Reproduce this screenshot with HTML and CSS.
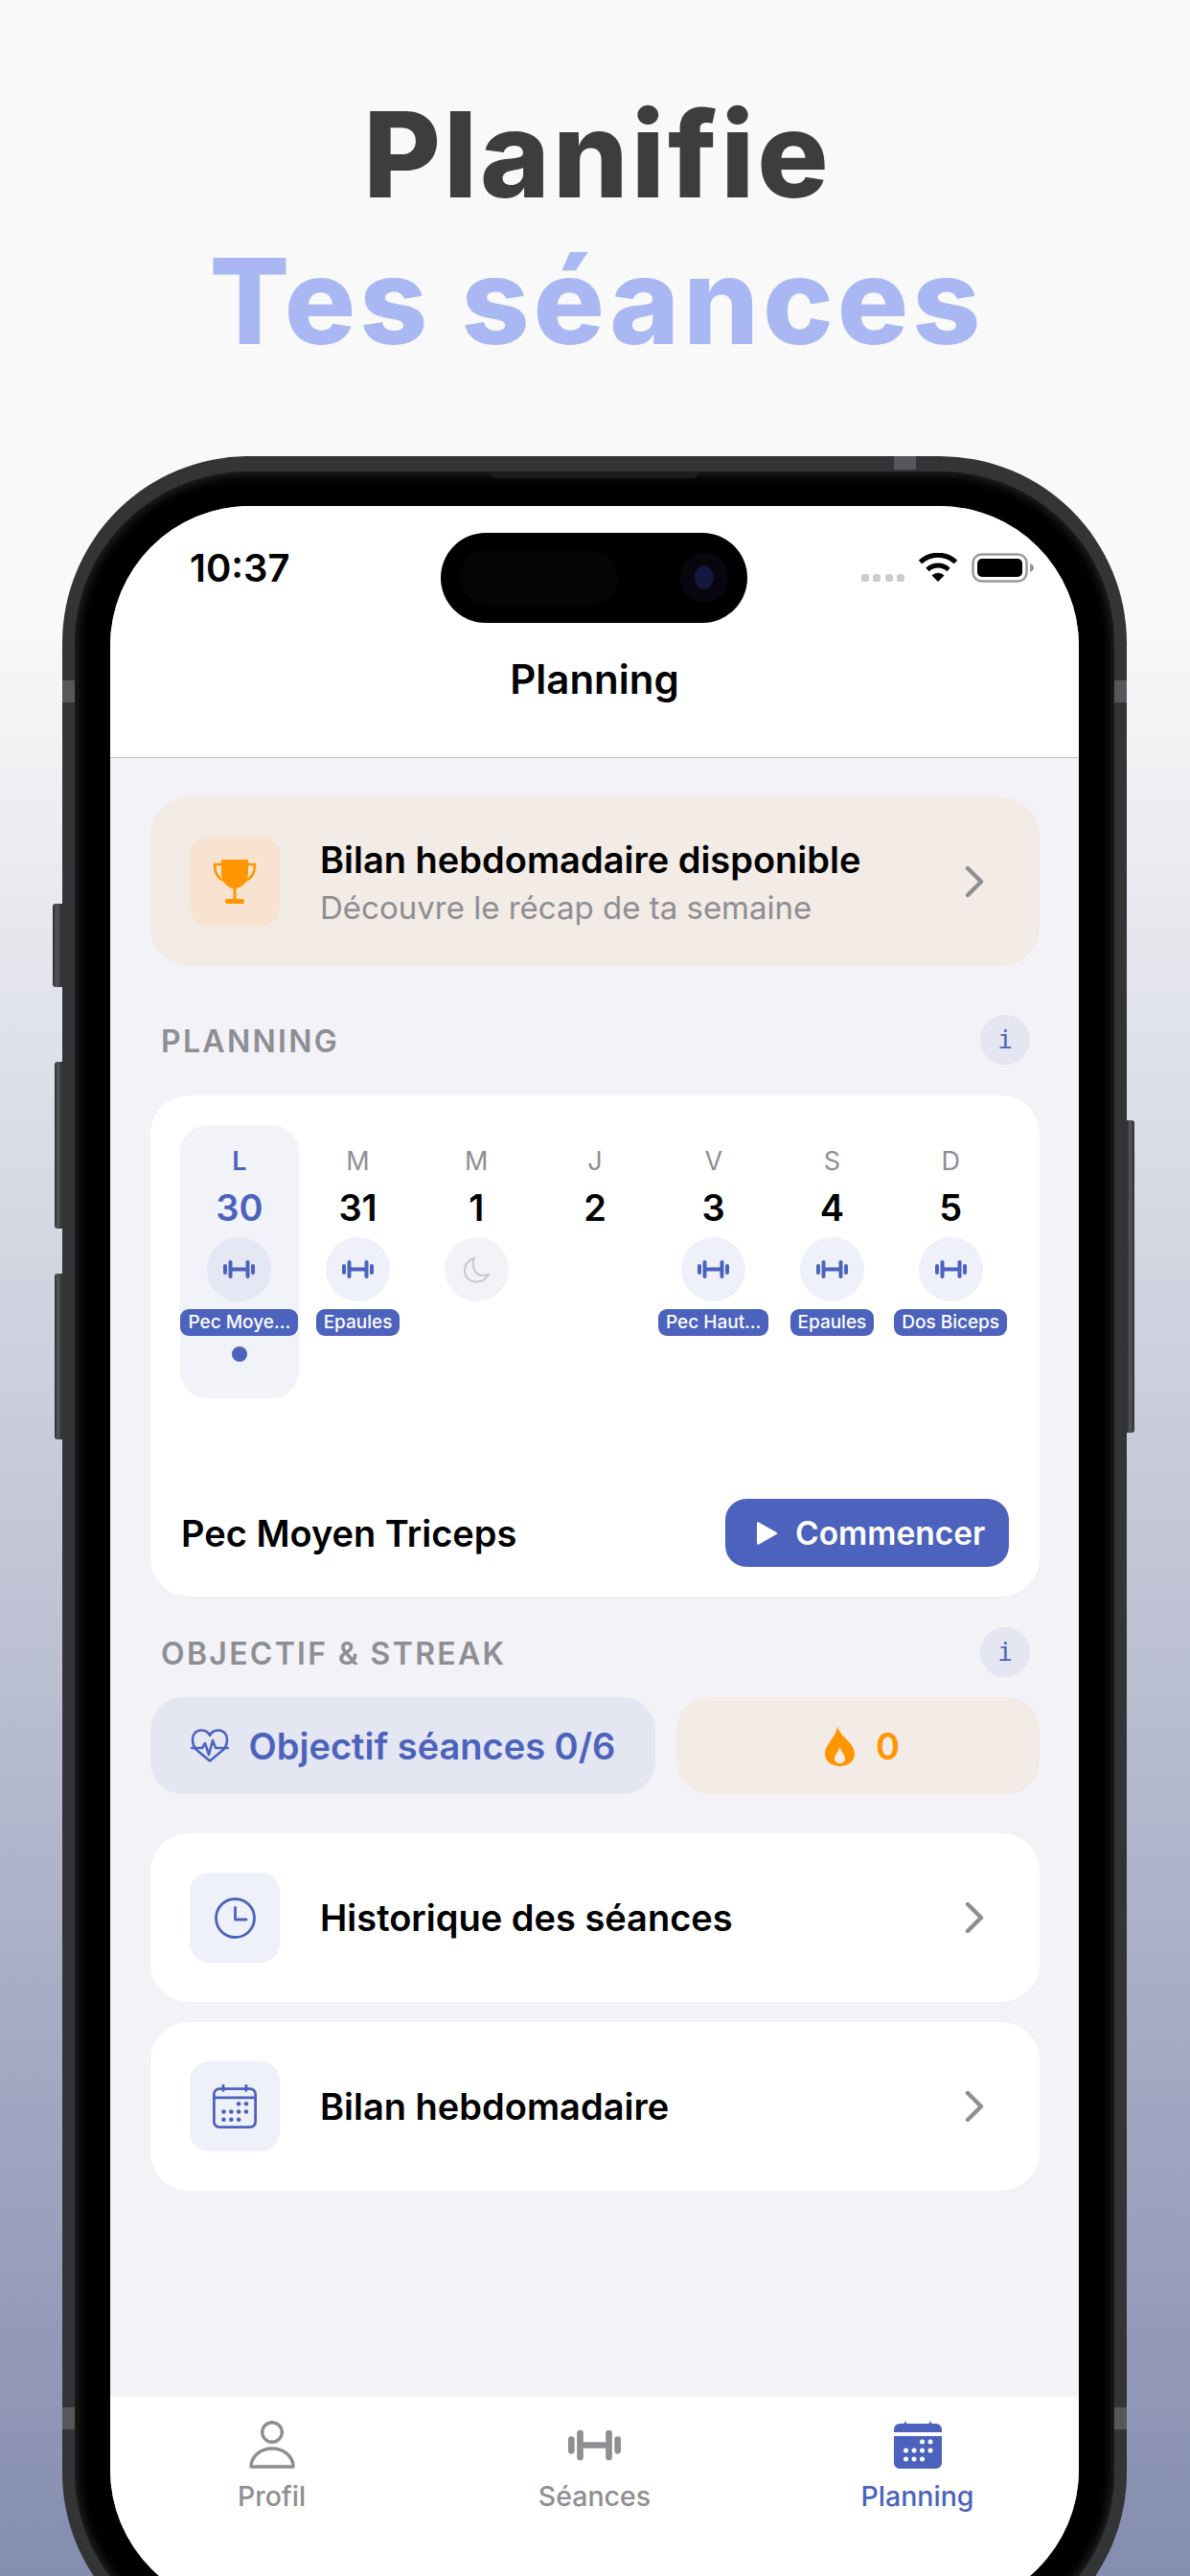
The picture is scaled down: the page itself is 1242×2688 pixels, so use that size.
FILE: index.html
```html
<!DOCTYPE html>
<html lang="fr">

<head>
    <meta charset="UTF-8">
    <title>Planifie tes séances</title>
    <link rel="stylesheet" href="styles.css">
</head>

<body>
    <svg class="sprite" xmlns="http://www.w3.org/2000/svg">
        <symbol id="dumbbell" viewBox="0 0 33 19">
            <path d="M2 6v7M31 6v7M7.500 2v15M25.500 2v15M7.500 9.500h18" fill="none" stroke="currentColor" stroke-width="4" stroke-linecap="round"/>
        </symbol>
        <symbol id="chevron" viewBox="0 0 20 34">
            <path d="M3 3l14 14L3 31" fill="none" stroke="#8e8e93" stroke-width="4.400" stroke-linecap="round" stroke-linejoin="round"/>
        </symbol>
    </svg>

    <header class="headline">
        <h1 class="headline-dark">Planifie</h1>
        <h1 class="headline-light">Tes séances</h1>
    </header>

    <div class="device">
        <span class="side-btn mute"></span>
        <span class="side-btn vol-up"></span>
        <span class="side-btn vol-down"></span>
        <span class="side-btn power"></span>
        <span class="band band-top"></span>
        <span class="band band-left-1"></span>
        <span class="band band-right-1"></span>
        <span class="band band-left-2"></span>
        <span class="band band-right-2"></span>
        <span class="speaker"></span>

        <div class="screen">
            <div class="island">
                <span class="island-sensor"></span>
                <span class="island-lens"><span class="island-glass"></span></span>
            </div>

            <!-- Barre du haut -->
            <div class="topbar">
                <div class="status">
                    <span class="status-time">10:37</span>
                    <div class="status-icons">
                        <svg class="status-dots" width="45" height="8" viewBox="0 0 45 8">
                            <rect width="8" height="8" rx="2.5"/><rect x="12" width="8" height="8" rx="2.5"/><rect x="25" width="8" height="8" rx="2.5"/><rect x="37" width="8" height="8" rx="2.5"/>
                        </svg>
                        <svg width="42" height="30" viewBox="0 0 42 30">
                            <path d="M2.500 9.500a27 27 0 0 1 37 0M10 17.500a16 16 0 0 1 22 0" fill="none" stroke="#000" stroke-width="5"/>
                            <path d="M21 30l-6.500-6.500a9 9 0 0 1 13 0z"/>
                        </svg>
                        <svg width="66" height="31" viewBox="0 0 66 31">
                            <rect x="1.500" y="1.500" width="56" height="28" rx="9" fill="none" stroke="#999" stroke-width="2.500"/>
                            <rect x="6" y="6" width="47" height="19" rx="5"/>
                            <path d="M61 11c3 1 4 3 4 4.500s-1 3.500-4 4.500z" fill="#999"/>
                        </svg>
                    </div>
                </div>
                <div class="topbar-title">Planning</div>
            </div>

            <main class="content">
                <a class="row row-warm">
                    <span class="row-icon row-icon-warm">
                        <svg width="46" height="46" viewBox="0 0 46 46">
                            <path d="M9 0h28v14c0 10-7 16-14 16S9 24 9 14z" fill="#ff9500"/>
                            <path d="M9 5H2c0 9 4 15 10 17M37 5h7c0 9-4 15-10 17" fill="none" stroke="#ff9500" stroke-width="2.500"/>
                            <path d="M21.500 29h3v12h-3z" fill="#ff9500"/>
                            <rect x="13" y="41" width="20" height="5" rx="2" fill="#ff9500"/>
                        </svg>
                    </span>
                    <span class="row-text row-text-double">
                        <span class="row-title">Bilan hebdomadaire disponible</span>
                        <span class="row-sub">Découvre le récap de ta semaine</span>
                    </span>
                    <svg class="chevron"><use href="#chevron"/></svg>
                </a>

                <div class="section-head section-head-first">
                    <span class="section-label">PLANNING</span>
                    <span class="info">i</span>
                </div>

                <section class="card">
                    <div class="week">
                        <div class="day day-active">
                            <span class="day-letter">L</span>
                            <span class="day-num">30</span>
                            <span class="day-icon"><svg class="dumbbell"><use href="#dumbbell"/></svg></span>
                            <span class="tag">Pec Moye…</span>
                            <span class="day-dot"></span>
                        </div>
                        <div class="day">
                            <span class="day-letter">M</span>
                            <span class="day-num">31</span>
                            <span class="day-icon"><svg class="dumbbell"><use href="#dumbbell"/></svg></span>
                            <span class="tag">Epaules</span>
                        </div>
                        <div class="day">
                            <span class="day-letter">M</span>
                            <span class="day-num">1</span>
                            <span class="day-icon day-icon-rest">
                                <svg width="29" height="28" viewBox="0 0 29 28">
                                    <path d="M12 1.500C6 4 2 8.500 2 15c0 6.500 5 11.500 12 11.500 6 0 10.500-3 13-8-2 1-4 1.500-6 1.500C13 20 8.500 11 12 1.500z" fill="none" stroke="#c7c7cc" stroke-width="2" stroke-linejoin="round"/>
                                </svg>
                            </span>
                        </div>
                        <div class="day">
                            <span class="day-letter">J</span>
                            <span class="day-num">2</span>
                        </div>
                        <div class="day">
                            <span class="day-letter">V</span>
                            <span class="day-num">3</span>
                            <span class="day-icon"><svg class="dumbbell"><use href="#dumbbell"/></svg></span>
                            <span class="tag">Pec Haut…</span>
                        </div>
                        <div class="day">
                            <span class="day-letter">S</span>
                            <span class="day-num">4</span>
                            <span class="day-icon"><svg class="dumbbell"><use href="#dumbbell"/></svg></span>
                            <span class="tag">Epaules</span>
                        </div>
                        <div class="day">
                            <span class="day-letter">D</span>
                            <span class="day-num">5</span>
                            <span class="day-icon"><svg class="dumbbell"><use href="#dumbbell"/></svg></span>
                            <span class="tag">Dos Biceps</span>
                        </div>
                    </div>

                    <div class="card-foot">
                        <span class="session-name">Pec Moyen Triceps</span>
                        <button class="start" type="button">
                            <svg width="22" height="26" viewBox="0 0 22 26"><path d="M2 1.500L20.500 12a1.200 1.200 0 0 1 0 2L2 24.500c-1 .5-2 0-2-1V2.500c0-1 1-1.500 2-1z" fill="#fff"/></svg>
                            Commencer
                        </button>
                    </div>
                </section>

                <div class="section-head">
                    <span class="section-label">OBJECTIF &amp; STREAK</span>
                    <span class="info">i</span>
                </div>

                <div class="goals">
                    <div class="goal goal-blue">
                        <svg width="40" height="35" viewBox="0 0 40 35" fill="none" stroke="#4c62bd" stroke-width="2.500" stroke-linejoin="round" stroke-linecap="round">
                            <path d="M5 21C2.500 17.500 2 14 2 11 2 5.500 6 1.500 11 1.500c4 0 7.500 2 9 5.500 1.500-3.500 5-5.500 9-5.500 5 0 9 4 9 9.500 0 3-.5 6.500-3 10L20 33.500z"/>
                            <path d="M1 20h11l3-5 4 12 4-15 3 8h13"/>
                        </svg>
                        <span>Objectif séances 0/6</span>
                    </div>
                    <div class="goal goal-warm">
                        <svg width="31" height="42" viewBox="0 0 31 42">
                            <path fill-rule="evenodd" fill="#ff9500" d="M13 0c1 10 18 17 18 29 0 8-7 13-15.500 13S0 37 0 29C0 19 12 12 13 0zM15.500 22c-1.500 5-5.500 8-5.500 12 0 3.500 2.500 5 5.500 5s5.500-1.500 5.500-5c0-4-4-7-5.500-12z"/>
                        </svg>
                        <span>0</span>
                    </div>
                </div>

                <a class="row row-plain row-first">
                    <span class="row-icon row-icon-blue">
                        <svg width="43" height="43" viewBox="0 0 43 43" fill="none" stroke="#4c62bd" stroke-width="2.800" stroke-linecap="round" stroke-linejoin="round">
                            <circle cx="21.500" cy="21.500" r="20"/>
                            <path d="M21.500 10.500V23H33"/>
                        </svg>
                    </span>
                    <span class="row-text"><span class="row-title">Historique des séances</span></span>
                    <svg class="chevron"><use href="#chevron"/></svg>
                </a>

                <a class="row row-plain row-next">
                    <span class="row-icon row-icon-blue">
                        <svg width="46" height="46" viewBox="0 0 50 50">
                            <path d="M12 1v6M38 1v6" stroke="#4c62bd" stroke-width="3" stroke-linecap="round"/>
                            <rect x="1.500" y="5" width="47" height="43.500" rx="6" fill="none" stroke="#4c62bd" stroke-width="3"/>
                            <path d="M1.500 15h47" stroke="#4c62bd" stroke-width="3"/>
                            <g fill="#4c62bd">
                                <circle cx="29.500" cy="22" r="2.500"/><circle cx="38" cy="22" r="2.500"/>
                                <circle cx="12.500" cy="31" r="2.500"/><circle cx="21" cy="31" r="2.500"/><circle cx="29.500" cy="31" r="2.500"/><circle cx="38" cy="31" r="2.500"/>
                                <circle cx="12.500" cy="40" r="2.500"/><circle cx="21" cy="40" r="2.500"/><circle cx="29.500" cy="40" r="2.500"/>
                            </g>
                        </svg>
                    </span>
                    <span class="row-text"><span class="row-title">Bilan hebdomadaire</span></span>
                    <svg class="chevron"><use href="#chevron"/></svg>
                </a>
            </main>

            <!-- Onglets -->
            <nav class="tabs">
                <div class="tab">
                    <span class="tab-icon">
                        <svg width="48" height="50" viewBox="0 0 48 50" fill="none" stroke="#8e8e93" stroke-width="3.400" stroke-linejoin="round">
                            <circle cx="24" cy="12" r="10.300"/>
                            <path d="M2 48c0-11 10-19 22-19s22 8 22 19z"/>
                        </svg>
                    </span>
                    <span class="tab-label">Profil</span>
                </div>
                <div class="tab">
                    <span class="tab-icon"><svg class="dumbbell-big"><use href="#dumbbell"/></svg></span>
                    <span class="tab-label">Séances</span>
                </div>
                <div class="tab tab-active">
                    <span class="tab-icon">
                        <svg width="50" height="50" viewBox="0 0 50 50">
                            <path d="M12 0l1.500 3h23L38 0l1.500 3H44a6 6 0 0 1 6 6v3H0V9a6 6 0 0 1 6-6h4.500zM0 16h50v28a6 6 0 0 1-6 6H6a6 6 0 0 1-6-6z" fill="#4c62bd"/>
                            <g fill="#fff">
                                <circle cx="29.500" cy="22" r="2.500"/><circle cx="38" cy="22" r="2.500"/>
                                <circle cx="12.500" cy="31" r="2.500"/><circle cx="21" cy="31" r="2.500"/><circle cx="29.500" cy="31" r="2.500"/><circle cx="38" cy="31" r="2.500"/>
                                <circle cx="12.500" cy="40" r="2.500"/><circle cx="21" cy="40" r="2.500"/><circle cx="29.500" cy="40" r="2.500"/>
                            </g>
                        </svg>
                    </span>
                    <span class="tab-label">Planning</span>
                </div>
            </nav>
        </div>
    </div>
</body>

</html>
```

FILE: styles.css
```css
* {
    box-sizing: border-box;
}

html, body {
    margin: 0;
    padding: 0;
}

body {
    width: 1242px;
    height: 2688px;
    overflow: hidden;
    font-family: Inter, "Liberation Sans", sans-serif;
    color: #000;
    background: linear-gradient(180deg, #f9f9f9 0, #f9f9f9 640px, #858db0 2688px);
}

.sprite {
    display: none;
}

/* Titre */
.headline {
    padding-top: 85px;
    margin-bottom: 85px;
    text-align: center;
}

.headline h1 {
    margin: 0;
    font-size: 124px;
    line-height: 153px;
    font-weight: 800;
    letter-spacing: 3px;
}

.headline .headline-dark {
    padding-left: 5px;
    color: #3d3d3d;
}

.headline .headline-light {
    padding-left: 4px;
    letter-spacing: 4px;
    color: #a9b8f2;
}

/* Telephone */
.device {
    position: relative;
    width: 1111px;
    margin-left: 65px;
    padding: 36px 37px;
    background: #000;
    border-radius: 195px;
    border-style: solid;
    border-width: 16px 13px;
    border-color: #333436;
    box-shadow: inset 0 0 12px 2px #2b2b2b;
}

.side-btn {
    position: absolute;
    background: linear-gradient(90deg, #2a2b2c, #55575a 40%, #2f3031);
    border-radius: 3px 0 0 3px;
}

.mute {
    left: -23px;
    top: 451px;
    width: 10px;
    height: 87px;
}

.vol-up {
    left: -21px;
    top: 616px;
    width: 8px;
    height: 174px;
}

.vol-down {
    left: -21px;
    top: 837px;
    width: 8px;
    height: 173px;
}

.power {
    right: -21px;
    top: 677px;
    width: 8px;
    height: 326px;
    border-radius: 0 3px 3px 0;
}

.band {
    position: absolute;
    background: #55585a;
}

.band-top {
    left: 855px;
    top: -16px;
    width: 23px;
    height: 14px;
}

.band-left-1, .band-left-2 {
    left: -13px;
    width: 13px;
    height: 23px;
}

.band-right-1, .band-right-2 {
    right: -13px;
    width: 13px;
    height: 23px;
}

.band-left-1, .band-right-1 {
    top: 218px;
}

.band-left-2, .band-right-2 {
    top: 2020px;
}

.speaker {
    position: absolute;
    left: 433px;
    top: 0;
    width: 219px;
    height: 7px;
    background: #1c1c1d;
    border-radius: 0 0 8px 8px;
}

.screen {
    position: relative;
    display: flex;
    flex-direction: column;
    height: 2195px;
    overflow: hidden;
    background: #f2f2f7;
    border-radius: 146px;
}

.island {
    position: absolute;
    left: 345px;
    top: 28px;
    width: 320px;
    height: 94px;
    background: #000;
    border-radius: 47px;
}

.island-sensor {
    position: absolute;
    left: 20px;
    top: 18px;
    width: 165px;
    height: 58px;
    background: #050505;
    border-radius: 29px;
}

.island-lens {
    position: absolute;
    left: 250px;
    top: 21px;
    width: 50px;
    height: 52px;
    background: #08060f;
    border-radius: 50%;
}

.island-glass {
    position: absolute;
    left: 15px;
    top: 13px;
    width: 20px;
    height: 25px;
    background: #14183f;
    border-radius: 50%;
}

/* Barre du haut */
.topbar {
    height: 263px;
    background: #fff;
    border-bottom: 1px solid #c6c6c8;
}

.status {
    display: flex;
    justify-content: space-between;
    align-items: flex-start;
    padding: 49px 46px 0 83px;
}

.status-time {
    font-size: 40px;
    line-height: 32px;
    font-weight: 600;
}

.status-icons {
    display: flex;
    align-items: flex-start;
    gap: 14px;
}

.status-dots {
    margin-top: 22px;
    fill: #ccc;
}

.topbar-title {
    margin-top: 75px;
    font-size: 42px;
    line-height: 50px;
    font-weight: 600;
    text-align: center;
}

/* Contenu */
.content {
    flex: 1;
    padding: 41px 41px 0 42px;
}

.row {
    display: flex;
    align-items: center;
    height: 176px;
    padding: 0 58px 0 41px;
    border-radius: 40px;
}

.row-warm {
    background: #f3ebe6;
}

.row-plain {
    background: #fff;
}

.row-first {
    margin-top: 41px;
}

.row-next {
    margin-top: 21px;
}

.row-icon {
    display: flex;
    align-items: center;
    justify-content: center;
    width: 94px;
    height: 94px;
    border-radius: 20px;
}

.row-icon-warm {
    background: #f7e3cf;
}

.row-icon-blue {
    background: #eef1f9;
}

.row-text {
    display: flex;
    flex: 1;
    flex-direction: column;
    gap: 2px;
    margin-left: 42px;
}

.row-text-double {
    padding-top: 4px;
}

.row-title {
    font-size: 38px;
    line-height: 48px;
    font-weight: 600;
}

.row-sub {
    font-size: 33px;
    line-height: 48px;
    color: #8e8e93;
}

.chevron {
    width: 20px;
    height: 34px;
}

.section-head {
    display: flex;
    align-items: center;
    justify-content: space-between;
    margin-top: 32px;
    padding: 0 10px 0 11px;
}

.section-head-first {
    margin-top: 51px;
}

.section-label {
    padding-top: 2px;
    font-size: 32px;
    font-weight: 600;
    letter-spacing: 2.300px;
    color: #8e8e93;
}

.info {
    width: 52px;
    height: 52px;
    font-family: "DejaVu Sans Mono", monospace;
    font-size: 26px;
    line-height: 52px;
    text-align: center;
    color: #4c62bd;
    background: #e4e6f2;
    border-radius: 50%;
}

/* Carte planning */
.card {
    margin-top: 32px;
    padding: 31px;
    background: #fff;
    border-radius: 40px;
}

.week {
    display: grid;
    grid-template-columns: repeat(7, 1fr);
    height: 285px;
}

.day {
    display: flex;
    flex-direction: column;
    align-items: center;
    padding-top: 22px;
    border-radius: 28px;
}

.day-active {
    background: #f2f3f9;
}

.day-letter {
    font-size: 27px;
    line-height: 32px;
    color: #8e8e93;
}

.day-num {
    margin-top: 10px;
    font-size: 38px;
    line-height: 44px;
    font-weight: 600;
}

.day-active .day-letter, .day-active .day-num {
    font-weight: 600;
    color: #4c62bd;
}

.day-icon {
    display: flex;
    align-items: center;
    justify-content: center;
    width: 67px;
    height: 67px;
    margin-top: 9px;
    color: #4c62bd;
    background: #eef1f9;
    border-radius: 50%;
}

.day-active .day-icon {
    background: #e4e7f4;
}

.day-icon-rest {
    background: #f2f2f7;
}

.dumbbell {
    width: 33px;
    height: 19px;
}

.tag {
    height: 28px;
    margin-top: 8px;
    padding: 0 8px;
    font-size: 19px;
    line-height: 28px;
    font-weight: 500;
    white-space: nowrap;
    color: #fff;
    background: #4c62bd;
    border-radius: 9px;
}

.day-dot {
    width: 16px;
    height: 16px;
    margin-top: 11px;
    background: #4c62bd;
    border-radius: 50%;
}

.card-foot {
    display: flex;
    align-items: center;
    justify-content: space-between;
    margin-top: 105px;
    padding: 0 1px;
}

.session-name {
    font-size: 38px;
    font-weight: 600;
}

.start {
    display: flex;
    align-items: center;
    gap: 18px;
    width: 296px;
    height: 71px;
    padding: 0 0 0 33px;
    font-family: inherit;
    font-size: 33.500px;
    font-weight: 600;
    color: #fff;
    background: #4c62bd;
    border: 0;
    border-radius: 22px;
}

/* Objectif */
.goals {
    display: flex;
    gap: 22px;
    margin-top: 21px;
}

.goal {
    display: flex;
    align-items: center;
    justify-content: center;
    height: 101px;
    font-size: 38px;
    font-weight: 600;
    border-radius: 34px;
}

.goal-blue {
    width: 527px;
    gap: 21px;
    color: #4c62bd;
    background: #e4e6f2;
}

.goal-warm {
    flex: 1;
    gap: 22px;
    padding-left: 9px;
    color: #ff9500;
    background: #f3ebe6;
}

/* Onglets */
.tabs {
    display: grid;
    grid-template-columns: repeat(3, 1fr);
    height: 222px;
    padding-top: 25px;
    background: #fff;
}

.tab {
    display: flex;
    flex-direction: column;
    align-items: center;
    color: #8e8e93;
}

.tab-active {
    color: #4c62bd;
}

.tab-icon {
    display: flex;
    align-items: center;
    justify-content: center;
    height: 50px;
}

.dumbbell-big {
    width: 55px;
    height: 33px;
}

.tab-label {
    margin-top: 11px;
    font-size: 28.500px;
    line-height: 36px;
    font-weight: 500;
}
```
